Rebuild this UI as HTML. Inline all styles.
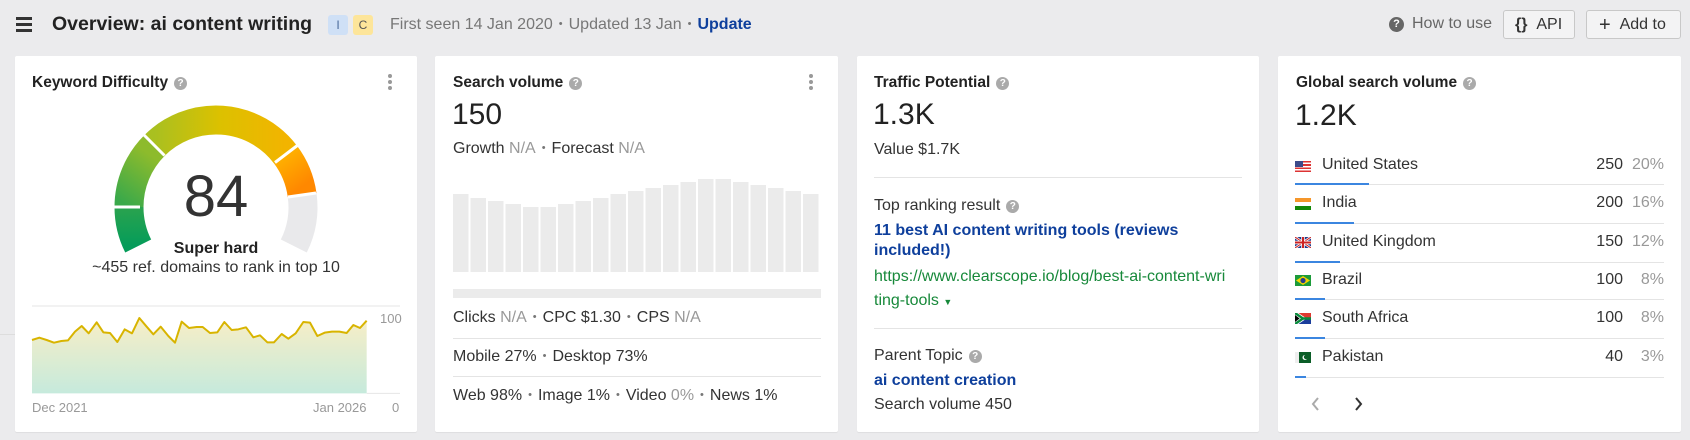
<!DOCTYPE html>
<html><head><meta charset="utf-8"><style>
*{box-sizing:border-box;margin:0;padding:0}
body{width:1690px;height:440px;background:#ebebed;font-family:"Liberation Sans",Arial,sans-serif;color:#333;position:relative;overflow:hidden}
.a{position:absolute;white-space:nowrap}
.card{position:absolute;top:56px;height:376px;background:#fff;border-radius:2px;box-shadow:0 1px 1px rgba(0,0,0,.06)}
.t{font-weight:bold;font-size:15.5px;color:#222}
.q{display:inline-block;width:13px;height:13px;border-radius:50%;background:#aaa;color:#fff;font-size:10px;line-height:13px;text-align:center;font-weight:bold;vertical-align:1px;margin-left:6px}
.big{font-size:30px;color:#222}
.tx{font-size:16px;color:#333}
.g{color:#999}
.dot{color:#777;margin:0 6px;font-size:11px;vertical-align:2px}
.hr{position:absolute;height:1px;background:#e4e4e4}
.lnk{color:#0e3f9c;font-weight:bold;font-size:16px}
.btn{position:absolute;top:10px;height:29px;border:1px solid #c8c8c8;border-radius:3px;background:#f3f3f4;font-size:16px;color:#333;line-height:27px}
</style></head><body>
<!-- header -->
<div class="a" style="left:16px;top:17px;width:16px;height:14px">
<div style="height:2.5px;background:#333;margin-bottom:3.5px"></div><div style="height:2.5px;background:#333;margin-bottom:3.5px"></div><div style="height:2.5px;background:#333"></div></div>
<div class="a" style="left:52px;top:13px;font-size:19.5px;font-weight:bold;color:#222">Overview: ai content writing</div>
<div class="a" style="left:328px;top:15px;width:20px;height:20px;background:#cfe0f6;border-radius:3px;font-size:12px;text-align:center;line-height:20px;color:#4a6a9a">I</div>
<div class="a" style="left:353px;top:15px;width:20px;height:20px;background:#fde59a;border-radius:3px;font-size:12px;text-align:center;line-height:20px;color:#555">C</div>
<div class="a" style="left:390px;top:16px;font-size:16px;color:#777">First seen 14 Jan 2020<span class="dot">•</span>Updated 13 Jan<span class="dot">•</span><b style="color:#0e3f9c">Update</b></div>
<div class="a" style="left:1389px;top:17px;width:15px;height:15px;border-radius:50%;background:#666;color:#fff;font-size:11px;font-weight:bold;text-align:center;line-height:15px">?</div>
<div class="a" style="left:1412px;top:15px;font-size:16px;color:#666">How to use</div>
<div class="btn" style="left:1503px;width:72px;padding-left:11px"><b>{}</b>&nbsp;&nbsp;API</div>
<div class="btn" style="left:1586px;width:95px;padding-left:12px"><span style="font-size:20px;vertical-align:-2px">+</span>&nbsp;&nbsp;Add to</div>
<div class="hr" style="left:0;top:334px;width:15px;background:#ddd"></div>

<!-- card1 -->
<div class="card" style="left:15px;width:402px"></div>
<div class="a t" style="left:32px;top:74px">Keyword Difficulty<span class="q">?</span></div>
<div class="a" style="left:388px;top:74px;width:4px"><div style="width:4px;height:4px;border-radius:50%;background:#999;margin-bottom:2px"></div><div style="width:4px;height:4px;border-radius:50%;background:#999;margin-bottom:2px"></div><div style="width:4px;height:4px;border-radius:50%;background:#999"></div></div>
<svg class="a" style="left:0;top:0" width="440" height="300">
<defs>
<linearGradient id="g1" x1="0" y1="1" x2="0" y2="0"><stop offset="0" stop-color="#059c5a"/><stop offset="1" stop-color="#2aa34e"/></linearGradient>
<linearGradient id="g2" x1="0" y1="1" x2="0.3" y2="0"><stop offset="0" stop-color="#3aa94a"/><stop offset="1" stop-color="#8dbb2c"/></linearGradient>
<linearGradient id="g3" x1="0" y1="0" x2="1" y2="0"><stop offset="0" stop-color="#a9c020"/><stop offset="0.5" stop-color="#dcc100"/><stop offset="1" stop-color="#f2b400"/></linearGradient>
<linearGradient id="g4" x1="0" y1="0" x2="0.3" y2="1"><stop offset="0" stop-color="#ffb000"/><stop offset="1" stop-color="#ff8800"/></linearGradient>
</defs>
<g fill="none" stroke-width="29">
<path d="M138.2 246 A87 87 0 0 1 129 207" stroke="url(#g1)"/>
<path d="M129 207 A87 87 0 0 1 154.5 145.5" stroke="url(#g2)"/>
<path d="M154.5 145.5 A87 87 0 0 1 285.5 154.6" stroke="url(#g3)"/>
<path d="M285.5 154.6 A87 87 0 0 1 302.1 194.9" stroke="url(#g4)"/>
<path d="M302.1 194.9 A87 87 0 0 1 293.8 246" stroke="#e9e9eb"/>
</g>
<g stroke="#fff" stroke-width="3">
<line x1="140" y1="207" x2="112" y2="207"/>
<line x1="164.5" y1="155.5" x2="143" y2="134"/>
<line x1="275" y1="162.5" x2="298" y2="145"/>
<line x1="288" y1="197" x2="316" y2="193"/>
</g>
</svg>
<div class="a" style="left:0;width:432px;text-align:center;top:163px;font-size:58px;color:#333">84</div>
<div class="a" style="left:0;width:432px;text-align:center;top:240px;font-size:16px;font-weight:bold;color:#222">Super hard</div>
<div class="a" style="left:0;width:432px;text-align:center;top:259px;font-size:16px;color:#333">~455 ref. domains to rank in top 10</div>
<svg class="a" style="left:0;top:290px" width="420" height="150" viewBox="0 0 1260 450">
<defs><linearGradient id="ar" x1="0" y1="0" x2="0" y2="1"><stop offset="0" stop-color="#f8eec6"/><stop offset="1" stop-color="#c6eadc"/></linearGradient></defs>
<line x1="96" y1="48" x2="1200" y2="48" stroke="#e6e6e6" stroke-width="3"/>
<path fill="url(#ar)" d="M96 150 L118 143 140 150 162 158 184 153 204 151 225 125 245 108 266 130 290 97 310 127 330 129 352 156 374 118 396 130 418 84 440 110 460 133 482 110 505 138 525 158 545 95 567 114 590 111 608 111 630 129 652 127 673 96 695 120 715 118 738 112 760 142 780 136 802 157 822 157 845 132 865 146 887 130 910 96 930 98 952 138 974 128 996 125 1018 125 1040 129 1060 105 1080 114 1100 92 L1100 310 L96 310Z"/>
<polyline fill="none" stroke="#d8b400" stroke-width="6" stroke-linejoin="round" points="96,150 118,143 140,150 162,158 184,153 204,151 225,125 245,108 266,130 290,97 310,127 330,129 352,156 374,118 396,130 418,84 440,110 460,133 482,110 505,138 525,158 545,95 567,114 590,111 608,111 630,129 652,127 673,96 695,120 715,118 738,112 760,142 780,136 802,157 822,157 845,132 865,146 887,130 910,96 930,98 952,138 974,128 996,125 1018,125 1040,129 1060,105 1080,114 1100,92"/>
<line x1="1100" y1="310" x2="1200" y2="310" stroke="#e6e6e6" stroke-width="3"/>
</svg>
<div class="a" style="left:380px;top:311px;font-size:13px;color:#999">100</div>
<div class="a" style="left:32px;top:400px;font-size:13px;color:#999">Dec 2021</div>
<div class="a" style="left:313px;top:400px;font-size:13px;color:#999">Jan 2026</div>
<div class="a" style="left:392px;top:400px;font-size:13px;color:#999">0</div>

<!-- card2 -->
<div class="card" style="left:435px;width:403px"></div>
<div class="a t" style="left:453px;top:74px">Search volume<span class="q">?</span></div>
<div class="a" style="left:809px;top:74px;width:4px"><div style="width:4px;height:4px;border-radius:50%;background:#999;margin-bottom:2px"></div><div style="width:4px;height:4px;border-radius:50%;background:#999;margin-bottom:2px"></div><div style="width:4px;height:4px;border-radius:50%;background:#999"></div></div>
<div class="a big" style="left:452px;top:98px">150</div>
<div class="a tx" style="left:453px;top:140px">Growth <span class="g">N/A</span><span class="dot">•</span>Forecast <span class="g">N/A</span></div>
<svg class="a" style="left:453px;top:170px" width="370" height="130">
<g fill="#ebebeb">
<rect x="0" y="24" width="15.5" height="78"/><rect x="17.5" y="28" width="15.5" height="74"/><rect x="35" y="31" width="15.5" height="71"/><rect x="52.5" y="34" width="15.5" height="68"/><rect x="70" y="37" width="15.5" height="65"/><rect x="87.5" y="37" width="15.5" height="65"/><rect x="105" y="34" width="15.5" height="68"/><rect x="122.5" y="31" width="15.5" height="71"/><rect x="140" y="28" width="15.5" height="74"/><rect x="157.5" y="24" width="15.5" height="78"/><rect x="175" y="21" width="15.5" height="81"/><rect x="192.5" y="18" width="15.5" height="84"/><rect x="210" y="15" width="15.5" height="87"/><rect x="227.5" y="12" width="15.5" height="90"/><rect x="245" y="9" width="15.5" height="93"/><rect x="262.5" y="9" width="15.5" height="93"/><rect x="280" y="12" width="15.5" height="90"/><rect x="297.5" y="15" width="15.5" height="87"/><rect x="315" y="18" width="15.5" height="84"/><rect x="332.5" y="21" width="15.5" height="81"/><rect x="350" y="24" width="15.5" height="78"/>
<rect x="0" y="119" width="368" height="9"/>
</g></svg>
<div class="a tx" style="left:453px;top:309px">Clicks <span class="g">N/A</span><span class="dot">•</span>CPC $1.30<span class="dot">•</span>CPS <span class="g">N/A</span></div>
<div class="hr" style="left:453px;top:338px;width:368px"></div>
<div class="a tx" style="left:453px;top:348px">Mobile 27%<span class="dot">•</span>Desktop 73%</div>
<div class="hr" style="left:453px;top:376px;width:368px"></div>
<div class="a tx" style="left:453px;top:387px">Web 98%<span class="dot">•</span>Image 1%<span class="dot">•</span>Video <span class="g">0%</span><span class="dot">•</span>News 1%</div>

<!-- card3 -->
<div class="card" style="left:857px;width:402px"></div>
<div class="a t" style="left:874px;top:74px">Traffic Potential<span class="q">?</span></div>
<div class="a big" style="left:873px;top:98px">1.3K</div>
<div class="a tx" style="left:874px;top:141px">Value $1.7K</div>
<div class="hr" style="left:874px;top:177px;width:368px"></div>
<div class="a tx" style="left:874px;top:197px">Top ranking result<span class="q">?</span></div>
<div class="a lnk" style="left:874px;top:221px;line-height:20px;white-space:normal;width:350px">11 best AI content writing tools (reviews included!)</div>
<div class="a" style="left:874px;top:265px;font-size:16px;color:#17893a;line-height:24px;white-space:normal;width:372px;word-break:break-all">https://www.clearscope.io/blog/best-ai-content-wri<br>ting-tools <span style="font-size:9px">▼</span></div>
<div class="hr" style="left:874px;top:328px;width:368px"></div>
<div class="a tx" style="left:874px;top:347px">Parent Topic<span class="q">?</span></div>
<div class="a lnk" style="left:874px;top:372px">ai content creation</div>
<div class="a tx" style="left:874px;top:396px">Search volume 450</div>

<!-- card4 -->
<div class="card" style="left:1278px;width:403px"></div>
<div class="a t" style="left:1296px;top:74px">Global search volume<span class="q">?</span></div>
<div class="a big" style="left:1295px;top:99px">1.2K</div>

<div class="a" style="left:1295px;top:161px;width:16px;height:11px;background:repeating-linear-gradient(#d33 0 1.6px,#fff 1.6px 3.2px)"><div style="width:8px;height:6px;background:#3b4a8a"></div></div>
<div class="a tx" style="left:1322px;top:156px">United States</div>
<div class="a tx" style="left:1580px;top:156px;width:43px;text-align:right">250</div>
<div class="a tx g" style="left:1625px;top:156px;width:39px;text-align:right">20%</div>
<div class="hr" style="left:1295px;top:184px;width:369px"></div><div class="a" style="left:1295px;top:183px;width:74px;height:2px;background:#3b86e0"></div>

<div class="a" style="left:1295px;top:198px;width:16px;height:12px;background:linear-gradient(#f5962a 0 4px,#fff 4px 8px,#138808 8px)"></div>
<div class="a tx" style="left:1322px;top:194px">India</div>
<div class="a tx" style="left:1580px;top:194px;width:43px;text-align:right">200</div>
<div class="a tx g" style="left:1625px;top:194px;width:39px;text-align:right">16%</div>
<div class="hr" style="left:1295px;top:223px;width:369px"></div><div class="a" style="left:1295px;top:222px;width:59px;height:2px;background:#3b86e0"></div>

<svg class="a" style="left:1295px;top:237px" width="16" height="11"><rect width="16" height="11" fill="#1f3a8a"/><path d="M0 0L16 11M16 0L0 11" stroke="#fff" stroke-width="2.5"/><path d="M0 0L16 11M16 0L0 11" stroke="#c22" stroke-width="1"/><path d="M8 0V11M0 5.5H16" stroke="#fff" stroke-width="3.5"/><path d="M8 0V11M0 5.5H16" stroke="#c22" stroke-width="2"/></svg>
<div class="a tx" style="left:1322px;top:233px">United Kingdom</div>
<div class="a tx" style="left:1580px;top:233px;width:43px;text-align:right">150</div>
<div class="a tx g" style="left:1625px;top:233px;width:39px;text-align:right">12%</div>
<div class="hr" style="left:1295px;top:262px;width:369px"></div><div class="a" style="left:1295px;top:261px;width:45px;height:2px;background:#3b86e0"></div>

<svg class="a" style="left:1295px;top:275px" width="16" height="11"><rect width="16" height="11" fill="#1c9b3a"/><path d="M8 1L15 5.5 8 10 1 5.5Z" fill="#f4d400"/><circle cx="8" cy="5.5" r="2.6" fill="#27408b"/></svg>
<div class="a tx" style="left:1322px;top:271px">Brazil</div>
<div class="a tx" style="left:1580px;top:271px;width:43px;text-align:right">100</div>
<div class="a tx g" style="left:1625px;top:271px;width:39px;text-align:right">8%</div>
<div class="hr" style="left:1295px;top:299px;width:369px"></div><div class="a" style="left:1295px;top:298px;width:30px;height:2px;background:#3b86e0"></div>

<svg class="a" style="left:1295px;top:313px" width="16" height="11"><rect width="16" height="5.5" fill="#de3a31"/><rect y="5.5" width="16" height="5.5" fill="#1a3d9b"/><path d="M0 0L8 5.5 0 11" fill="none" stroke="#fff" stroke-width="4"/><path d="M0 0L8 5.5 0 11M8 5.5H16" fill="none" stroke="#078a3c" stroke-width="2.4"/><path d="M0 2L4.5 5.5 0 9Z" fill="#000"/></svg>
<div class="a tx" style="left:1322px;top:309px">South Africa</div>
<div class="a tx" style="left:1580px;top:309px;width:43px;text-align:right">100</div>
<div class="a tx g" style="left:1625px;top:309px;width:39px;text-align:right">8%</div>
<div class="hr" style="left:1295px;top:338px;width:369px"></div><div class="a" style="left:1295px;top:337px;width:30px;height:2px;background:#3b86e0"></div>

<svg class="a" style="left:1295px;top:352px" width="16" height="11"><rect width="16" height="11" fill="#0b5d27"/><rect width="4" height="11" fill="#eee"/><circle cx="10" cy="5.5" r="2.5" fill="#fff"/><circle cx="11" cy="5" r="2.2" fill="#0b5d27"/></svg>
<div class="a tx" style="left:1322px;top:348px">Pakistan</div>
<div class="a tx" style="left:1580px;top:348px;width:43px;text-align:right">40</div>
<div class="a tx g" style="left:1625px;top:348px;width:39px;text-align:right">3%</div>
<div class="hr" style="left:1295px;top:377px;width:369px"></div><div class="a" style="left:1295px;top:376px;width:11px;height:2px;background:#3b86e0"></div>

<svg class="a" style="left:1308px;top:396px" width="60" height="16"><path d="M10 2L5 8 10 14" fill="none" stroke="#aaa" stroke-width="2"/><path d="M48 2L53 8 48 14" fill="none" stroke="#333" stroke-width="2"/></svg>
</body></html>
